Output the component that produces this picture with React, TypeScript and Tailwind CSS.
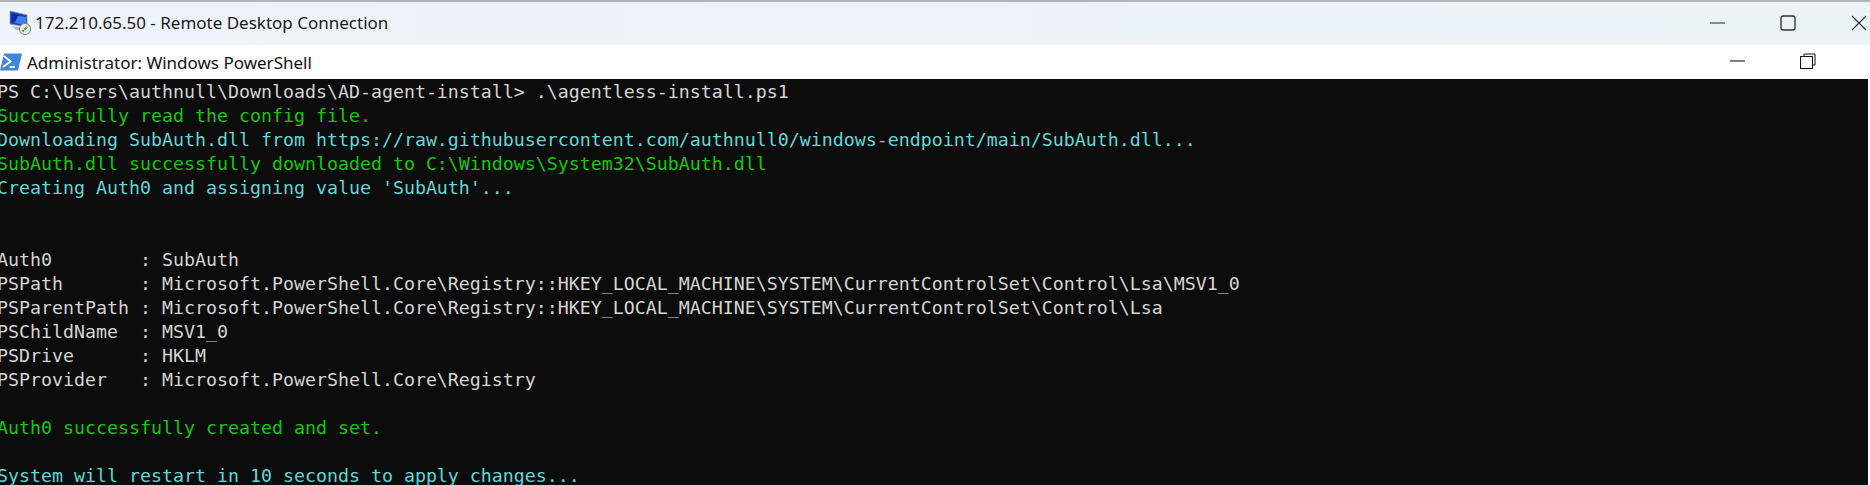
const mono = "font-['DejaVu_Sans_Mono','Liberation_Mono',monospace]";

const lines: { t: string; c: string }[] = [
  { t: "PS C:\\Users\\authnull\\Downloads\\AD-agent-install> .\\agentless-install.ps1", c: "text-[#d4d4d4]" },
  { t: "Successfully read the config file.", c: "text-[#16c60c]" },
  { t: "Downloading SubAuth.dll from https://raw.githubusercontent.com/authnull0/windows-endpoint/main/SubAuth.dll...", c: "text-[#61d6d6]" },
  { t: "SubAuth.dll successfully downloaded to C:\\Windows\\System32\\SubAuth.dll", c: "text-[#16c60c]" },
  { t: "Creating Auth0 and assigning value 'SubAuth'...", c: "text-[#61d6d6]" },
  { t: " ", c: "" },
  { t: " ", c: "" },
  { t: "Auth0        : SubAuth", c: "text-[#d4d4d4]" },
  { t: "PSPath       : Microsoft.PowerShell.Core\\Registry::HKEY_LOCAL_MACHINE\\SYSTEM\\CurrentControlSet\\Control\\Lsa\\MSV1_0", c: "text-[#d4d4d4]" },
  { t: "PSParentPath : Microsoft.PowerShell.Core\\Registry::HKEY_LOCAL_MACHINE\\SYSTEM\\CurrentControlSet\\Control\\Lsa", c: "text-[#d4d4d4]" },
  { t: "PSChildName  : MSV1_0", c: "text-[#d4d4d4]" },
  { t: "PSDrive      : HKLM", c: "text-[#d4d4d4]" },
  { t: "PSProvider   : Microsoft.PowerShell.Core\\Registry", c: "text-[#d4d4d4]" },
  { t: " ", c: "" },
  { t: "Auth0 successfully created and set.", c: "text-[#16c60c]" },
  { t: " ", c: "" },
  { t: "System will restart in 10 seconds to apply changes...", c: "text-[#61d6d6]" },
];

function RdpIcon() {
  return (
    <svg width="24" height="26" viewBox="0 0 24 26" className="shrink-0">
      <path d="M2 1 L19 5 V17 L2 14 Z" fill="#1a3fc4" stroke="#8a97a8" strokeWidth="0.8" />
      <path d="M4 3 L12 5 L5 12 L3 12 Z" fill="#0a2aa8" />
      <path d="M10 6 L18 7 V15 L7 13 Z" fill="#3f7fe8" />
      <path d="M4 16 L14 18 L18 21 L8 20 Z" fill="#b8bcc2" />
      <circle cx="17" cy="19" r="5.6" fill="#e8ece8" stroke="#7d8790" strokeWidth="1" />
      <path d="M14.5 21.5 L17 19 M17 19 L19.5 16.5" stroke="#3f9a2a" strokeWidth="2" strokeDasharray="2 0.8" />
    </svg>
  );
}

function PsIcon() {
  return (
    <svg width="22" height="18" viewBox="0 0 22 18" className="shrink-0">
      <path d="M4 0.5 H22 L18 17.5 H0 Z" fill="#3f86d8" />
      <path d="M4 3 L10.5 8.5 L3 14" fill="none" stroke="#ffffff" strokeWidth="2" />
      <path d="M9.5 14 H15" stroke="#ffffff" strokeWidth="1.8" />
    </svg>
  );
}

export default function App() {
  return (
    <div className="w-[1870px] h-[485px] overflow-hidden flex flex-col bg-white">
      <div className="h-[2px] shrink-0 bg-[#b1b2b6]" />
      <div className="h-[43px] shrink-0 flex items-center bg-gradient-to-r from-[#eef2fa] to-[#ebf3f7] pl-[8px] pb-[2px] font-['Noto_Sans','Open_Sans',sans-serif] text-[#1a1a1a]">
        <RdpIcon />
        <span className="ml-[3px] text-[17px] leading-none whitespace-nowrap">172.210.65.50 - Remote Desktop Connection</span>
        <div className="ml-auto flex items-center">
          <svg width="16" height="2" viewBox="0 0 16 2" className="mr-[54px]">
            <path d="M0 1 H15" stroke="#222222" strokeWidth="1" />
          </svg>
          <svg width="16" height="16" viewBox="0 0 16 16" className="mr-[55px]">
            <rect x="1" y="1" width="14" height="14" rx="2" fill="none" stroke="#333333" strokeWidth="1.4" />
          </svg>
          <svg width="16" height="16" viewBox="0 0 16 16" className="mr-[3px]">
            <path d="M1 1 L15 15 M15 1 L1 15" stroke="#333333" strokeWidth="1.2" />
          </svg>
        </div>
      </div>
      <div className="h-[34px] shrink-0 flex items-center mr-[1px] bg-white font-['Noto_Sans','Open_Sans',sans-serif] text-[#111111]">
        <PsIcon />
        <span className="ml-[5px] text-[17px] leading-none whitespace-nowrap">Administrator: Windows PowerShell</span>
        <div className="ml-auto flex items-center pb-[2px]">
          <svg width="16" height="2" viewBox="0 0 16 2" className="mr-[54px]">
            <path d="M0 1 H15" stroke="#000000" strokeWidth="1" />
          </svg>
          <svg width="16" height="16" viewBox="0 0 16 16" className="mr-[53px]">
            <path d="M4 3 V1 H15 V12 H13" fill="none" stroke="#111111" strokeWidth="1" />
            <rect x="0.5" y="3.5" width="12" height="12" fill="none" stroke="#111111" strokeWidth="1" />
          </svg>
        </div>
      </div>
      <div className={`flex-1 mr-[2px] overflow-hidden bg-[#0c0c0c] pt-[1px] text-[18.27px] leading-[24px] ${mono}`}>
        <div className="-ml-[3px]">
          {lines.map((l, i) => (
            <div key={i} className={`h-[24px] whitespace-pre ${l.c}`}>{l.t}</div>
          ))}
        </div>
      </div>
    </div>
  );
}
